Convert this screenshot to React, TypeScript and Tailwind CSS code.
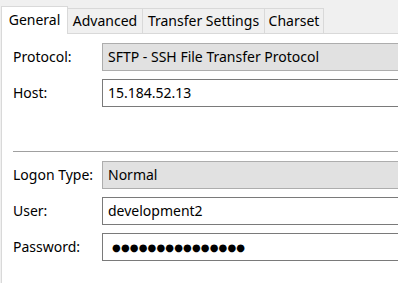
import React from "react";

const font = { fontFamily: '"Noto Sans", "Open Sans", sans-serif' };

function Field({ value, gray, dots }: { value: string; gray?: boolean; dots?: boolean }) {
  return (
    <div
      className={
        "h-[28px] w-[320px] shrink-0 flex items-center pl-[5px] border " +
        (gray ? "bg-[#e1e1e1] border-[#adadad]" : "bg-white border-[#7a7a7a]")
      }
    >
      {dots ? (
        <span
          className="text-[10px] tracking-[0.15px] text-black leading-none pl-[4px] pt-[2px]"
          style={{ fontFamily: '"DejaVu Sans", sans-serif' }}
        >
          {value}
        </span>
      ) : (
        <span className="text-[14px] text-black leading-none">{value}</span>
      )}
    </div>
  );
}

function Row({ label, children }: { label: string; children: React.ReactNode }) {
  return (
    <div className="flex items-center h-[28px]">
      <div className="w-[89px] shrink-0 text-[14px] text-black leading-none">{label}</div>
      {children}
    </div>
  );
}

export default function App() {
  return (
    <div className="w-[398px] h-[283px] bg-[#f0f0f0] overflow-hidden flex flex-col" style={font}>
      <div className="h-[33px] flex items-end pl-[1px] shrink-0">
        <div className="relative z-10 h-[28px] mb-[-1px] w-[67px] bg-white border-l border-t border-r border-[#d9d9d9] flex justify-center pt-[4px] text-[14px] text-black leading-none">
          <span className="mt-[2px]">General</span>
        </div>
        <div className="h-[25px] w-[75px] border-t border-r border-[#d9d9d9] flex justify-center text-[14px] text-black leading-none pt-[5px]">
          Advanced
        </div>
        <div className="h-[25px] w-[122px] border-t border-r border-[#d9d9d9] flex justify-center text-[14px] text-black leading-none pt-[5px]">
          Transfer Settings
        </div>
        <div className="h-[25px] w-[59px] border-t border-r border-[#d9d9d9] flex justify-center text-[14px] text-black leading-none pt-[5px]">
          Charset
        </div>
      </div>
      <div className="flex-1 ml-[1px] bg-white border-l border-t border-[#d9d9d9] pl-[11px] pt-[9px] flex flex-col">
        <div className="flex flex-col gap-[8px]">
          <Row label="Protocol:">
            <Field value="SFTP - SSH File Transfer Protocol" gray />
          </Row>
          <Row label="Host:">
            <Field value="15.184.52.13" />
          </Row>
        </div>
        <div className="mt-[44px] h-px bg-[#a0a0a0] w-[400px] shrink-0" />
        <div className="mt-[9px] flex flex-col gap-[8px]">
          <Row label="Logon Type:">
            <Field value="Normal" gray />
          </Row>
          <Row label="User:">
            <Field value="development2" />
          </Row>
          <Row label="Password:">
            <Field value="●●●●●●●●●●●●●●●" dots />
          </Row>
        </div>
      </div>
    </div>
  );
}
